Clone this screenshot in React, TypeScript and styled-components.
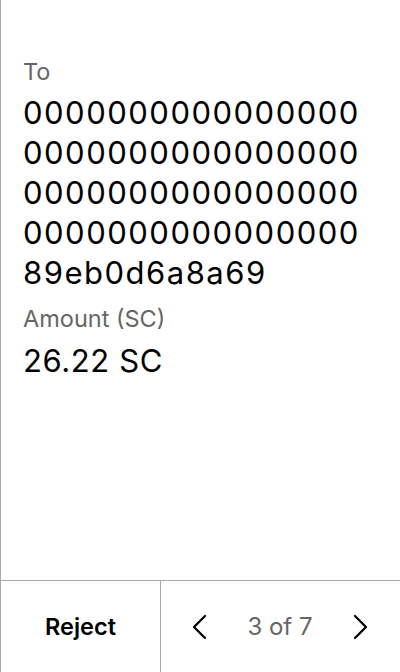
import React from "react";
import styled, { createGlobalStyle } from "styled-components";

const Global = createGlobalStyle`
  html, body { margin: 0; padding: 0; background: #fff; }
  body { font-family: Inter, "Noto Sans", sans-serif; }
`;

const Screen = styled.div`
  width: 400px;
  height: 672px;
  box-sizing: border-box;
  border-left: 1px solid #a8a8a8;
  display: flex;
  flex-direction: column;
`;

const Content = styled.div`
  flex: 1;
  padding: 57px 24px 0 22px;
  display: flex;
  flex-direction: column;
`;

const Label = styled.div<{ $gap?: number }>`
  font-size: 23.5px;
  color: #666;
  line-height: 30px;
  margin-top: ${(p) => p.$gap ?? 0}px;
`;

const Address = styled.div`
  font-size: 31px;
  color: #000;
  line-height: 40px;
  letter-spacing: 1.5px;
  word-break: break-all;
  width: 345px;
  margin-top: 6px;
`;

const Amount = styled.div`
  font-size: 31px;
  color: #000;
  line-height: 40px;
  letter-spacing: 0.6px;
  margin-top: 7px;
`;

const Footer = styled.div`
  height: 92px;
  box-sizing: border-box;
  border-top: 1px solid #a8a8a8;
  display: flex;
`;

const RejectButton = styled.div`
  width: 159px;
  border-right: 1px solid #a8a8a8;
  display: flex;
  align-items: center;
  justify-content: center;
  font-weight: 600;
  font-size: 23.5px;
  color: #000;
`;

const Pager = styled.div`
  flex: 1;
  display: flex;
  align-items: center;
  justify-content: space-between;
  padding: 0 31px 0 30px;
`;

const PageText = styled.span`
  font-size: 24px;
  color: #666;
`;

const Chevron = ({ dir }: { dir: "left" | "right" }) => (
  <svg width="16" height="26" viewBox="0 0 16 26">
    <path
      d={dir === "left" ? "M14 2 L3 13 L14 24" : "M2 2 L13 13 L2 24"}
      fill="none"
      stroke="#000"
      strokeWidth="2.3"
      strokeLinecap="round"
      strokeLinejoin="round"
    />
  </svg>
);

export default function App() {
  return (
    <>
      <Global />
      <Screen>
        <Content>
          <Label>To</Label>
          <Address>
            000000000000000000000000000000000000000000000000000000000000000089eb0d6a8a69
          </Address>
          <Label $gap={11}>Amount (SC)</Label>
          <Amount>26.22 SC</Amount>
        </Content>
        <Footer>
          <RejectButton>Reject</RejectButton>
          <Pager>
            <Chevron dir="left" />
            <PageText>3 of 7</PageText>
            <Chevron dir="right" />
          </Pager>
        </Footer>
      </Screen>
    </>
  );
}
